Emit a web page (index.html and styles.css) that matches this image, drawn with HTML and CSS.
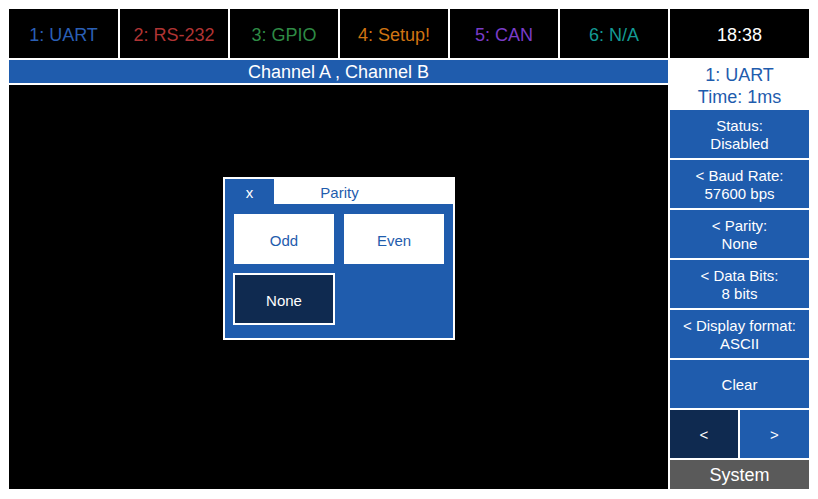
FILE: index.html
```html
<!DOCTYPE html>
<html lang="en">
<head>
    <meta charset="UTF-8">
    <meta name="viewport" content="width=device-width, initial-scale=1.0">
    <title>UART Monitor</title>
    <link rel="stylesheet" href="styles.css">
</head>
<body>
    <div class="screen">
        <!-- Top tab bar -->
        <div class="tabs">
            <div class="tab tab-uart first">1: UART</div>
            <div class="tab tab-rs232">2: RS-232</div>
            <div class="tab tab-gpio">3: GPIO</div>
            <div class="tab tab-setup">4: Setup!</div>
            <div class="tab tab-can">5: CAN</div>
            <div class="tab tab-na">6: N/A</div>
        </div>
        <div class="clock">18:38</div>

        <!-- Main view -->
        <div class="main">
            <div class="channel-bar">Channel A , Channel B</div>
            <div class="view">
                <div class="dialog">
                    <div class="dialog-head">
                        <div class="dialog-close">x</div>
                        <div class="dialog-title">Parity</div>
                    </div>
                    <div class="dialog-body">
                        <div class="option">Odd</div>
                        <div class="option">Even</div>
                        <div class="option active">None</div>
                    </div>
                </div>
            </div>
        </div>

        <!-- Side menu -->
        <div class="side">
            <div class="side-info">
                <div>1: UART</div>
                <div>Time: 1ms</div>
            </div>
            <div class="side-btn">Status:<br>Disabled</div>
            <div class="side-btn">&lt; Baud Rate:<br>57600 bps</div>
            <div class="side-btn">&lt; Parity:<br>None</div>
            <div class="side-btn">&lt; Data Bits:<br>8 bits</div>
            <div class="side-btn">&lt; Display format:<br>ASCII</div>
            <div class="side-btn">Clear</div>
            <div class="side-nav">
                <div class="side-btn dark">&lt;</div>
                <div class="side-btn">&gt;</div>
            </div>
            <div class="side-system">System</div>
        </div>
    </div>
</body>
</html>
```

FILE: styles.css
```css
body {
    margin: 0;
    background-color: #fff;
    font-family: 'Liberation Sans', Arial, sans-serif;
}

.screen {
    margin: 9px;
    width: 800px;
    height: 480px;
    display: grid;
    grid-template-columns: 659px 139px;
    grid-template-rows: 49px 429px;
    gap: 2px;
}

/* top tabs */
.tabs {
    display: flex;
    gap: 2px;
}

.tab {
    width: 108px;
    background-color: #000;
    display: flex;
    justify-content: center;
    align-items: center;
    font-size: 18px;
    padding-top: 3px;
    box-sizing: border-box;
}

.tab.first {
    width: 109px;
}

.tab-uart { color: #2a5fb5; }
.tab-rs232 { color: #b03434; }
.tab-gpio { color: #2e8b45; }
.tab-setup { color: #d07412; }
.tab-can { color: #7a3cc8; }
.tab-na { color: #139a94; }

.clock {
    background-color: #000;
    color: #fff;
    display: flex;
    justify-content: center;
    align-items: center;
    font-size: 18px;
    padding-top: 3px;
    box-sizing: border-box;
}

/* main area */
.main {
    display: flex;
    flex-direction: column;
    gap: 2px;
}

.channel-bar {
    height: 23px;
    background-color: #1f5cad;
    color: #fff;
    font-size: 18px;
    text-align: center;
    line-height: 25px;
}

.view {
    flex: 1;
    background-color: #000;
    position: relative;
}

.dialog {
    position: absolute;
    left: 214px;
    top: 92px;
    width: 228px;
    height: 159px;
    border: 2px solid #fff;
    background-color: #1f5cad;
}

.dialog-head {
    display: flex;
    height: 25px;
}

.dialog-close {
    width: 49px;
    color: #fff;
    font-size: 15px;
    text-align: center;
    line-height: 28px;
}

.dialog-title {
    flex: 1;
    background-color: #fff;
    color: #1f5cad;
    font-size: 15px;
    text-align: center;
    line-height: 28px;
    padding-right: 48px;
}

.dialog-body {
    display: grid;
    grid-template-columns: 100px 100px;
    grid-auto-rows: 50px;
    column-gap: 10px;
    row-gap: 10px;
    padding: 10px 0 0 9px;
}

.option {
    background-color: #fff;
    color: #1f5cad;
    font-size: 15px;
    display: flex;
    justify-content: center;
    align-items: center;
    padding-top: 2px;
    box-sizing: border-box;
}

.option.active {
    background-color: #0f2a50;
    color: #fff;
    border: 2px solid #fff;
    margin: -1px -1px 0 -1px;
    height: 52px;
}

/* side menu */
.side {
    display: flex;
    flex-direction: column;
    gap: 2px;
}

.side-info {
    height: 48px;
    color: #1f5cad;
    font-size: 18px;
    line-height: 22px;
    text-align: center;
    padding-top: 4px;
    box-sizing: border-box;
}

.side-btn {
    height: 48px;
    background-color: #1f5cad;
    color: #fff;
    font-size: 15px;
    line-height: 18px;
    display: flex;
    justify-content: center;
    align-items: center;
    text-align: center;
    padding-top: 2px;
    box-sizing: border-box;
}

.side-btn.dark {
    background-color: #0f2a50;
}

.side-nav {
    display: grid;
    grid-template-columns: 68px 69px;
    gap: 2px;
}

.side-system {
    flex: 1;
    background-color: #5a5a5a;
    color: #fff;
    font-size: 18px;
    display: flex;
    justify-content: center;
    align-items: center;
    padding-top: 2px;
}
```
